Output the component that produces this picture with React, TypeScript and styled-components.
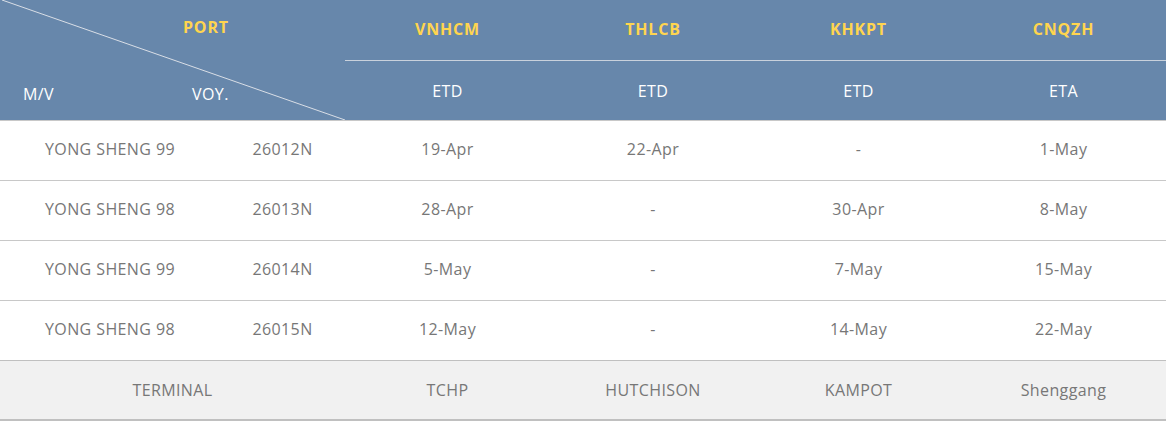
import { FC } from 'react';
import styled, { createGlobalStyle } from 'styled-components';

const GlobalStyle = createGlobalStyle`
  html, body {
    margin: 0;
    padding: 0;
    background: #fff;
  }
  body {
    font-family: "Open Sans", "Noto Sans", Arial, sans-serif;
  }
`;

const ports = [
  { code: 'VNHCM', kind: 'ETD' },
  { code: 'THLCB', kind: 'ETD' },
  { code: 'KHKPT', kind: 'ETD' },
  { code: 'CNQZH', kind: 'ETA' },
];

const rows = [
  { vessel: 'YONG SHENG 99', voy: '26012N', dates: ['19-Apr', '22-Apr', '-', '1-May'] },
  { vessel: 'YONG SHENG 98', voy: '26013N', dates: ['28-Apr', '-', '30-Apr', '8-May'] },
  { vessel: 'YONG SHENG 99', voy: '26014N', dates: ['5-May', '-', '7-May', '15-May'] },
  { vessel: 'YONG SHENG 98', voy: '26015N', dates: ['12-May', '-', '14-May', '22-May'] },
];

const terminals = ['TCHP', 'HUTCHISON', 'KAMPOT', 'Shenggang'];

const STable = styled.table`
  width: 1166px;
  border-collapse: collapse;
  table-layout: fixed;
  font-size: 16px;
  letter-spacing: 0.4px;
  line-height: 20px;
`;

const SHead = styled.thead`
  background: #6787ab;
`;

const SDiagCell = styled.th`
  position: relative;
  height: 120px;
  padding: 0;
  font-weight: normal;
`;

const SDiagLine = styled.svg`
  position: absolute;
  inset: 0;
  width: 100%;
  height: 100%;
`;

const SPortLabel = styled.span`
  position: absolute;
  top: 17px;
  left: 183px;
  color: #ffd54f;
  font-weight: bold;
  letter-spacing: 0.8px;
`;

const SCornerLabel = styled.span<{ $left: number }>`
  position: absolute;
  top: 84px;
  left: ${(p) => p.$left}px;
  color: #fff;
`;

const SPortCell = styled.th`
  height: 58px;
  padding: 0 0 2px;
  color: #ffd54f;
  font-weight: bold;
  letter-spacing: 0.8px;
  text-align: center;
  border-bottom: 1px solid #c9d1dc;
`;

const SKindCell = styled.th`
  height: 59px;
  padding: 0;
  color: #fff;
  font-weight: normal;
  text-align: center;
`;

const SRow = styled.tr`
  border-top: 1px solid #c8c8c8;
`;

const SCell = styled.td`
  height: 56px;
  padding: 0 0 3px;
  color: #777;
  text-align: center;
`;

const SFootRow = styled.tr`
  background: #f1f1f1;
  border-top: 1px solid #c0c0c0;
  border-bottom: 2px solid #c0c0c0;
`;

const SFootCell = styled.td`
  height: 58px;
  padding: 0;
  color: #777;
  text-align: center;
`;

const App: FC = () => {
  return (
    <>
      <GlobalStyle />
      <STable>
        <colgroup>
          <col style={{ width: 220 }} />
          <col style={{ width: 125 }} />
          <col style={{ width: 205 }} />
          <col style={{ width: 206 }} />
          <col style={{ width: 205 }} />
          <col style={{ width: 205 }} />
        </colgroup>
        <SHead>
          <tr>
            <SDiagCell colSpan={2} rowSpan={2}>
              <SDiagLine viewBox="0 0 345 120" preserveAspectRatio="none">
                <line x1="2" y1="0" x2="345" y2="120" stroke="#d9dee6" strokeWidth="1" />
              </SDiagLine>
              <SPortLabel>PORT</SPortLabel>
              <SCornerLabel $left={23}>M/V</SCornerLabel>
              <SCornerLabel $left={192}>VOY.</SCornerLabel>
            </SDiagCell>
            {ports.map((p) => (
              <SPortCell key={p.code}>{p.code}</SPortCell>
            ))}
          </tr>
          <tr>
            {ports.map((p) => (
              <SKindCell key={p.code}>{p.kind}</SKindCell>
            ))}
          </tr>
        </SHead>
        <tbody>
          {rows.map((r) => (
            <SRow key={r.voy}>
              <SCell>{r.vessel}</SCell>
              <SCell>{r.voy}</SCell>
              {r.dates.map((d, i) => (
                <SCell key={i}>{d}</SCell>
              ))}
            </SRow>
          ))}
          <SFootRow>
            <SFootCell colSpan={2}>TERMINAL</SFootCell>
            {terminals.map((t) => (
              <SFootCell key={t}>{t}</SFootCell>
            ))}
          </SFootRow>
        </tbody>
      </STable>
    </>
  );
};

export default App;
